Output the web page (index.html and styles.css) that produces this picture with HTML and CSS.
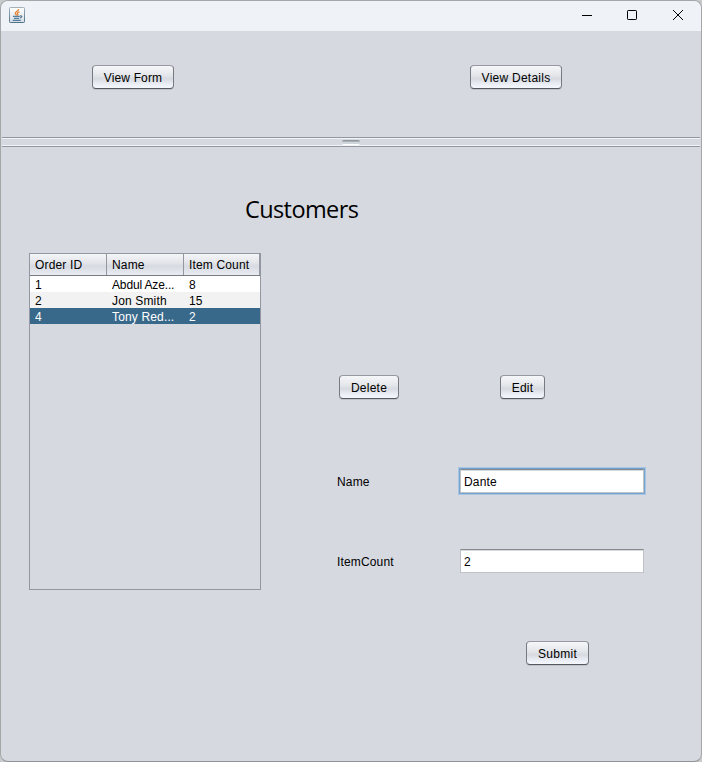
FILE: index.html
```
<!DOCTYPE html>
<html lang="en">
<head>
<meta charset="utf-8">
<title>Customers</title>
<link rel="stylesheet" href="styles.css">
</head>
<body>
<div class="window">
  <header class="titlebar">
    <svg class="app-icon" width="16" height="16" viewBox="0 0 16 16">
      <defs><linearGradient id="tile" x1="0" y1="0" x2="0" y2="1"><stop offset="0" stop-color="#fff"/><stop offset="1" stop-color="#d5dde5"/></linearGradient><linearGradient id="edge" x1="0" y1="0" x2="0" y2="1"><stop offset="0" stop-color="#a4b0ba"/><stop offset="1" stop-color="#50738c"/></linearGradient></defs>
      <rect x=".5" y=".5" width="15" height="15" rx=".8" fill="url(#tile)" stroke="url(#edge)"/>
      <path d="M9.600 2.200C9.800 4 6 4.500 6.300 6.300C6.400 7.100 7.500 7.600 7.500 8.500M10.500 4.800C8.500 5.300 8 6 8.700 6.800C9.100 7.300 8.800 8 8.300 8.500" fill="none" stroke="#e58232" stroke-width="1.300"/>
      <path d="M4 9.400H10.800M5 11.400H10.200M11 9C13.700 8.300 13.200 10.500 11 11M3.700 13.400H11.800" fill="none" stroke="#547c9b" stroke-width="1.200"/>
    </svg>
    <div class="controls">
      <svg width="10" height="10" viewBox="0 0 10 10"><path d="M0 5.500H10"/></svg>
      <svg width="10" height="10" viewBox="0 0 10 10"><rect x=".5" y=".5" width="9" height="9" rx=".7"/></svg>
      <svg width="10" height="10" viewBox="0 0 10 10"><path d="M0 0L10 10M10 0L0 10"/></svg>
    </div>
  </header>
  <nav class="toolbar">
    <button class="btn view-form"><span>View Form</span></button>
    <button class="btn view-details"><span>View Details</span></button>
  </nav>
  <div class="divider"><span class="grip"></span></div>
  <main class="content">
    <h1><span>Customers</span></h1>
    <div class="columns">
      <section class="table">
        <div class="row head"><span>Order ID</span><span>Name</span><span>Item Count</span></div>
        <div class="row"><span>1</span><span class="clipped">Abdul Aze...</span><span>8</span></div>
        <div class="row alt"><span>2</span><span>Jon Smith</span><span>15</span></div>
        <div class="row selected"><span>4</span><span>Tony Red...</span><span>2</span></div>
      </section>
      <section class="form">
        <div class="actions">
          <button class="btn delete"><span>Delete</span></button>
          <button class="btn edit"><span>Edit</span></button>
        </div>
        <div class="field focused"><label for="name">Name</label><input id="name" value="Dante"></div>
        <div class="field"><label for="count">ItemCount</label><input id="count" value="2"></div>
        <button class="btn submit"><span>Submit</span></button>
      </section>
    </div>
  </main>
</div>
</body>
</html>
```
FILE: styles.css
```
* { box-sizing: border-box; }
body {
  margin: 0;
  background: #c8cacc;
  font: 12px/16px "Liberation Sans", Arial, sans-serif;
  letter-spacing: .15px;
  color: #000;
}
.window {
  width: 702px;
  height: 762px;
  border: 1px solid #a5a6a8;
  border-bottom-color: #909297;
  border-radius: 8px;
  background: #d6d9e0;
  overflow: hidden;
}
.titlebar {
  height: 30px;
  padding: 0 18px 0 8px;
  display: flex;
  justify-content: space-between;
  align-items: flex-start;
  background: #eff3f8;
}
.app-icon { margin-top: 6px; }
.controls { display: flex; gap: 35px; margin-top: 9px; }
.controls svg { fill: none; stroke: #000; stroke-width: 1; overflow: visible; }
.controls svg:last-child { margin-left: 1px; }
.toolbar {
  height: 106px;
  padding: 34px 139px 0 91px;
  display: flex;
  justify-content: space-between;
}
.btn {
  height: 24px;
  padding: 2px 0 0;
  border: 1px solid;
  border-color: #96999f #777a80 #55585e;
  border-radius: 4px;
  background: linear-gradient(#f6f7f9 0, #e5e7eb 40%, #d7dae0 58%, #eceff5 85%, #f4f7fd 100%);
  box-shadow: 0 1px 0 #bfc2c9;
  font: inherit;
  letter-spacing: inherit;
  color: inherit;
  white-space: nowrap;
}
.view-form { width: 82px; }
.view-details { width: 92px; letter-spacing: .25px; }
.delete { width: 60px; letter-spacing: .25px; }
.edit { width: 45px; }
.submit { width: 63px; display: block; margin: 68px 0 0 189px; letter-spacing: .3px; }
.divider {
  height: 10px;
  margin: 0 1px;
  border: solid #9297a1;
  border-width: 1px 0;
  box-shadow: inset 0 1px #f1f3f6, inset 0 -1px #f1f3f6;
  padding: 2px 0 0 340px;
}
.grip {
  display: block;
  width: 18px;
  height: 5px;
  border-radius: 2px;
  background: linear-gradient(#8f969e 0 1px, #a9b0b6 1px 2px, #d0d7dc 2px 4px, #fff 4px);
}
.content { padding: 46px 0 0 28px; }
h1 {
  margin: 0 0 0 216px;
  height: 60px;
  font: 400 23.5px/32px "Open Sans", "Noto Sans", sans-serif;
  letter-spacing: -.6px;
}
.columns { display: flex; align-items: flex-start; }
.table {
  width: 232px;
  height: 337px;
  border: 1px solid #9297a1;
}
.row {
  display: grid;
  grid-template-columns: 77px 77px 76px;
  height: 16px;
  line-height: 19px;
  background: #fff;
}
.row span { padding-left: 5px; white-space: nowrap; }
.row .clipped { letter-spacing: -.15px; }
.alt { background: #f2f2f2; }
.selected { background: #39698a; color: #fff; }
.head {
  height: 22px;
  line-height: 23px;
  border-bottom: 1px solid #777a80;
  background: linear-gradient(#f4f5f7 0, #e4e6eb 40%, #d7dae1 58%, #e9ecf2 100%);
}
.head span { height: 21px; border-right: 1px solid #9297a1; }
.form { width: 308px; margin: 122px 0 0 76px; }
.actions { display: flex; gap: 101px; padding-left: 2px; }
.field {
  display: flex;
  justify-content: space-between;
  align-items: center;
  height: 24px;
  margin-top: 56px;
}
.field.focused { margin-top: 70px; }
.field label { padding-top: 2px; }
.field input {
  width: 184px;
  height: 24px;
  margin-right: 1px;
  padding: 1px 3px 0;
  border: 1px solid #bfc2c7;
  border-top-color: #85888d;
  background: #fff;
  box-shadow: inset 0 1px #d8dade;
  font: inherit;
  letter-spacing: inherit;
  color: inherit;
  outline: none;
}
.focused input {
  box-shadow: inset 0 1px #d8dade, 0 0 0 1px #73a4d1, 0 0 0 2px #a9c5e1;
}
```
